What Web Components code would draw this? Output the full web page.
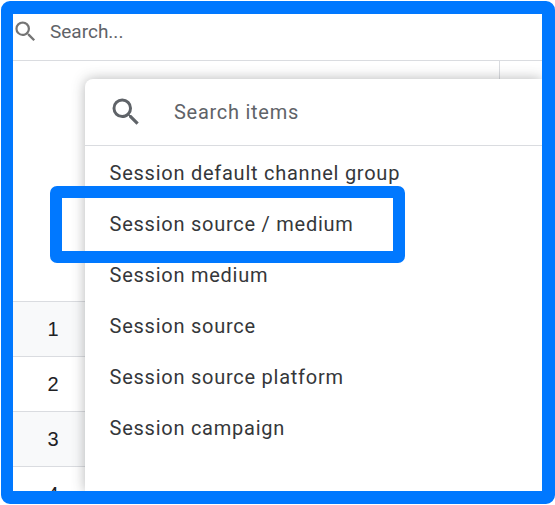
<!DOCTYPE html>
<html>
<head>
<meta charset="utf-8">
<title>Session dimensions</title>
<style>
  html, body { margin: 0; padding: 0; background: #fff; }
  body { width: 555px; height: 505px; overflow: hidden; font-family: Roboto, "Liberation Sans", sans-serif; }
</style>
</head>
<body>

<shot-frame>
  <search-bar placeholder="Search..."></search-bar>
  <data-table>
    <table-row index="1" shaded></table-row>
    <table-row index="2"></table-row>
    <table-row index="3" shaded></table-row>
    <table-row index="4"></table-row>
  </data-table>
  <picker-menu placeholder="Search items">
    <picker-item>Session default channel group</picker-item>
    <picker-item>Session source / medium</picker-item>
    <picker-item>Session medium</picker-item>
    <picker-item>Session source</picker-item>
    <picker-item>Session source platform</picker-item>
    <picker-item>Session campaign</picker-item>
  </picker-menu>
  <call-out></call-out>
</shot-frame>

<script>
const SEARCH_ICON = `
  <svg viewBox="0 0 24 24" aria-hidden="true">
    <path fill="currentColor" d="M15.5 14h-.79l-.28-.27A6.47 6.47 0 0 0 16 9.5 6.5 6.5 0 1 0 9.5 16c1.61 0 3.09-.59 4.23-1.57l.27.28v.79l5 4.99L20.49 19l-4.99-5zm-6 0C7.01 14 5 11.99 5 9.5S7.01 5 9.5 5 14 7.01 14 9.5 11.99 14 9.5 14z"/>
  </svg>`;

// Small helper: every element gets an open shadow root from a string.
class ShadowElement extends HTMLElement {
  constructor() {
    super();
    this.attachShadow({ mode: 'open' }).innerHTML = this.constructor.markup(this);
  }
}

// The thick blue screenshot border; everything else sits inside it.
class ShotFrame extends ShadowElement {
  static markup() {
    return `
      <style>
        :host {
          display: flex; flex-direction: column; position: relative;
          box-sizing: border-box; width: 554px; height: 503px; margin: 1px 0 0 1px;
          border: solid #0078ff; border-width: 13px 13px 13px 12px;
          border-radius: 9px; overflow: hidden; background: #fff;
        }
      </style>
      <slot></slot>`;
  }
}

class SearchBar extends ShadowElement {
  static markup(el) {
    return `
      <style>
        :host {
          display: flex; align-items: center; flex: none; height: 47px;
          box-sizing: border-box; border-bottom: 1px solid #dadce0; padding-bottom: 12px;
          color: #5f6368; font-size: 19px;
        }
        svg { width: 27px; height: 27px; margin-left: -1px; color: #757575; flex: none; }
        span { margin-left: 11px; }
      </style>
      ${SEARCH_ICON}<span>${el.getAttribute('placeholder')}</span>`;
  }
}

class DataTable extends ShadowElement {
  static markup() {
    return `
      <style>
        :host { display: flex; flex-direction: column; flex: 1; min-height: 0; }
        .head {
          flex: none; height: 240px; box-sizing: border-box;
          display: flex; justify-content: flex-end;
        }
        .head i {
          display: block; width: 42px; height: 40px;
          border-left: 1px solid #dadce0;
        }
        .rows { border-top: 1px solid #dadce0; }
      </style>
      <div class="head"><i></i></div>
      <div class="rows"><slot></slot></div>`;
  }
}

class TableRow extends ShadowElement {
  static markup(el) {
    return `
      <style>
        :host {
          display: block; height: 55px; box-sizing: border-box;
          border-bottom: 1px solid #dadce0;
          color: #202124; font: 20px "Liberation Sans", Arial, sans-serif;
        }
        :host([shaded]) { background: #f8f9fa; }
        div { width: 80px; line-height: 55px; text-align: center; }
      </style>
      <div>${el.getAttribute('index')}</div>`;
  }
}

// Floating dropdown over the table.
class PickerMenu extends ShadowElement {
  static markup(el) {
    return `
      <style>
        :host {
          position: absolute; left: 72px; top: 65px; right: 0; bottom: 0;
          display: flex; flex-direction: column;
          background: #fff; border-radius: 8px 0 0 0;
          box-shadow: 0 0 13px rgba(60, 64, 67, .38);
          font-family: Roboto, "Liberation Sans", sans-serif;
        }
        header {
          display: flex; align-items: center; flex: none; height: 67px;
          box-sizing: border-box; border-bottom: 1px solid #dadce0;
          color: #5f6368; font-size: 20px; letter-spacing: .73px;
        }
        svg { width: 36px; height: 36px; margin-left: 22.5px; flex: none; color: #5f6368; }
        span { margin-left: 30.5px; }
        .list { padding-top: 2px; }
      </style>
      <header>${SEARCH_ICON}<span>${el.getAttribute('placeholder')}</span></header>
      <div class="list"><slot></slot></div>`;
  }
}

class PickerItem extends ShadowElement {
  static markup() {
    return `
      <style>
        :host {
          display: block; height: 51px; line-height: 51px; padding-left: 24.5px;
          color: #35373a; font-size: 20px; letter-spacing: .75px; white-space: nowrap;
        }
      </style>
      <slot></slot>`;
  }
}

// Blue annotation rectangle drawn over the second menu item.
class CallOut extends ShadowElement {
  static markup() {
    return `
      <style>
        :host {
          position: absolute; left: 37px; top: 172px; width: 354.5px; height: 76.5px;
          box-sizing: border-box; border: 12.5px solid #0078ff; border-radius: 7px;
        }
      </style>`;
  }
}

customElements.define('shot-frame', ShotFrame);
customElements.define('search-bar', SearchBar);
customElements.define('data-table', DataTable);
customElements.define('table-row', TableRow);
customElements.define('picker-menu', PickerMenu);
customElements.define('picker-item', PickerItem);
customElements.define('call-out', CallOut);
</script>
</body>
</html>
